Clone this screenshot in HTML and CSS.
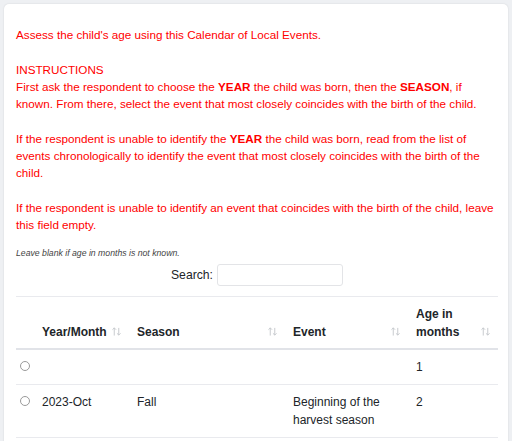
FILE: index.html
```html
<!DOCTYPE html>
<html>
<head>
    <title>Calendar of Local Events</title>
    <link rel="stylesheet" href="styles.css">
</head>
<body>
    <div class="card">
        <div class="instructions">
            Assess the child's age using this Calendar of Local Events.<br><br>
            INSTRUCTIONS<br>
            First ask the respondent to choose the <b>YEAR</b> the child was born, then the <b>SEASON</b>, if known. From there, select the event that most closely coincides with the birth of the child.<br><br>
            If the respondent is unable to identify the <b>YEAR</b> the child was born, read from the list of events chronologically to identify the event that most closely coincides with the birth of the child.<br><br>
            If the respondent is unable to identify an event that coincides with the birth of the child, leave this field empty.
        </div>
        <div class="note">Leave blank if age in months is not known.</div>
        <div class="search">
            <label for="search">Search:</label>
            <input type="text" id="search">
        </div>
        <table class="events">
            <thead>
                <tr>
                    <th class="col-pick"></th>
                    <th class="col-year sortable">Year/Month
                        <svg class="sort" viewBox="0 0 10 10"><path d="M2.5 9.5V1M0.5 3L2.5 1L4.5 3M7.5 1V9M5.5 7L7.5 9L9.5 7"/></svg>
                    </th>
                    <th class="col-season sortable">Season
                        <svg class="sort" viewBox="0 0 10 10"><path d="M2.5 9.5V1M0.5 3L2.5 1L4.5 3M7.5 1V9M5.5 7L7.5 9L9.5 7"/></svg>
                    </th>
                    <th class="col-event sortable">Event
                        <svg class="sort" viewBox="0 0 10 10"><path d="M2.5 9.5V1M0.5 3L2.5 1L4.5 3M7.5 1V9M5.5 7L7.5 9L9.5 7"/></svg>
                    </th>
                    <th class="col-age sortable">Age in months
                        <svg class="sort" viewBox="0 0 10 10"><path d="M2.5 9.5V1M0.5 3L2.5 1L4.5 3M7.5 1V9M5.5 7L7.5 9L9.5 7"/></svg>
                    </th>
                </tr>
            </thead>
            <tbody>
                <tr>
                    <td class="col-pick"><input type="radio" name="event"></td>
                    <td></td>
                    <td></td>
                    <td></td>
                    <td>1</td>
                </tr>
                <tr>
                    <td class="col-pick"><input type="radio" name="event"></td>
                    <td>2023-Oct</td>
                    <td>Fall</td>
                    <td>Beginning of the harvest season</td>
                    <td>2</td>
                </tr>
            </tbody>
        </table>
    </div>
</body>
</html>
```

FILE: styles.css
```css
body {
    margin: 0;
    padding: 4px 4px 0 4px;
    background-color: #eef0f3;
    font-family: "Liberation Sans", Arial, sans-serif;
    color: #212529;
    overflow: hidden;
}

.card {
    background-color: #fff;
    border-radius: 5px;
    box-shadow: 0 0 2px rgba(0, 0, 0, 0.12);
    padding: 22px 10px 20px 12px;
    min-height: 600px;
}

.instructions {
    color: #f00;
    font-size: 11.7px;
    line-height: 17.3px;
}

.instructions b {
    font-weight: bold;
}

.note {
    margin-top: 14px;
    font-size: 8.7px;
    font-style: italic;
    color: #444;
}

.search {
    display: flex;
    justify-content: center;
    align-items: center;
    gap: 4px;
    margin-top: 6px;
    font-size: 12.2px;
}

.search input {
    width: 118px;
    height: 20px;
    border: 1px solid #e3e4e7;
    border-radius: 3px;
    padding: 0 3px;
    margin-left: 0;
}

.events {
    width: 482px;
    table-layout: fixed;
    border-collapse: collapse;
    margin-top: 10px;
    font-size: 12px;
    line-height: 18px;
    border-top: 1px solid #e9eaee;
}

.events th,
.events td {
    box-sizing: border-box;
}

.events th {
    text-align: left;
    vertical-align: bottom;
    font-weight: bold;
    padding: 8px 8px 7px 8px;
    border-bottom: 2px solid #e1e3e8;
}

.events td {
    vertical-align: top;
    padding: 8px 8px 8px 8px;
    border-bottom: 1px solid #e9eaee;
}

.events .col-pick {
    width: 18px;
    padding-left: 4px;
    padding-right: 0;
}

.col-year { width: 95px; }
.col-season { width: 156px; }
.col-event { width: 123px; }
.col-age { width: 90px; }

.sortable {
    position: relative;
    padding-right: 24px !important;
}

.sort {
    position: absolute;
    right: 8px;
    bottom: 12px;
    width: 9px;
    height: 9px;
    fill: none;
    stroke: #c2c5ca;
    stroke-width: 1;
}

.col-pick input {
    -webkit-appearance: none;
    appearance: none;
    width: 10px;
    height: 10px;
    margin: 1px 0 0 0;
    border: 1px solid #9a9a9a;
    border-radius: 50%;
    background: #fff;
}
```
